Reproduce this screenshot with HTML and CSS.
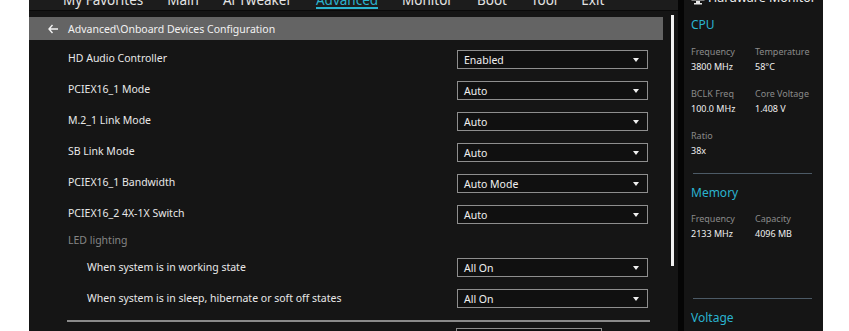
FILE: index.html
```html
<!DOCTYPE html>
<html lang="en">
<head>
  <meta charset="UTF-8" />
  <title>Advanced - Onboard Devices Configuration</title>
  <link rel="stylesheet" href="styles.css">
</head>
<body>
  <div class="screen">
    <div class="main">
      <nav class="topnav">
        <a href="#">My Favorites</a>
        <a href="#">Main</a>
        <a href="#">Ai Tweaker</a>
        <a href="#" class="active">Advanced</a>
        <a href="#">Monitor</a>
        <a href="#">Boot</a>
        <a href="#">Tool</a>
        <a href="#">Exit</a>
      </nav>

      <div class="body">
        <div class="page">
          <div class="crumb">
            <svg class="back" width="10" height="10" viewBox="0 0 10 10">
              <path d="M4.5 1 L1 5 L4.5 9 M1 5 H10" fill="none" stroke="#f2f2f2" stroke-width="1.4"/>
            </svg>
            <span>Advanced\Onboard Devices Configuration</span>
          </div>

          <div class="list">
            <div class="row"><span class="label">HD Audio Controller</span><div class="select"><span>Enabled</span><i class="caret"></i></div></div>
            <div class="row"><span class="label">PCIEX16_1 Mode</span><div class="select"><span>Auto</span><i class="caret"></i></div></div>
            <div class="row"><span class="label">M.2_1 Link Mode</span><div class="select"><span>Auto</span><i class="caret"></i></div></div>
            <div class="row"><span class="label">SB Link Mode</span><div class="select"><span>Auto</span><i class="caret"></i></div></div>
            <div class="row"><span class="label">PCIEX16_1 Bandwidth</span><div class="select"><span>Auto Mode</span><i class="caret"></i></div></div>
            <div class="row"><span class="label">PCIEX16_2 4X-1X Switch</span><div class="select"><span>Auto</span><i class="caret"></i></div></div>

            <div class="group">LED lighting</div>
            <div class="row sub"><span class="label">When system is in working state</span><div class="select"><span>All On</span><i class="caret"></i></div></div>
            <div class="row sub"><span class="label">When system is in sleep, hibernate or soft off states</span><div class="select"><span>All On</span><i class="caret"></i></div></div>

            <div class="sep"></div>
            <div class="row last"><div class="select short"></div></div>
          </div>
        </div>
        <div class="scroll"><div class="thumb"></div></div>
      </div>
    </div>

    <aside class="monitor">
      <div class="hm-title">
        <svg class="hm-icon" width="14" height="14" viewBox="0 0 14 14">
          <rect x="0.5" y="0.5" width="13" height="9" fill="#e8e8e8"/>
          <rect x="5" y="10" width="4" height="2" fill="#e8e8e8"/>
          <rect x="3" y="12" width="8" height="1.5" fill="#e8e8e8"/>
        </svg>
        <span>Hardware Monitor</span>
      </div>

      <h2>CPU</h2>
      <div class="stats">
        <div><div class="k">Frequency</div><div class="v">3800 MHz</div></div>
        <div><div class="k">Temperature</div><div class="v">58°C</div></div>
        <div><div class="k">BCLK Freq</div><div class="v">100.0 MHz</div></div>
        <div><div class="k">Core Voltage</div><div class="v">1.408 V</div></div>
        <div><div class="k">Ratio</div><div class="v">38x</div></div>
      </div>

      <div class="hm-sep first"></div>
      <h2>Memory</h2>
      <div class="stats mem">
        <div><div class="k">Frequency</div><div class="v">2133 MHz</div></div>
        <div><div class="k">Capacity</div><div class="v">4096 MB</div></div>
      </div>

      <div class="hm-sep second"></div>
      <h2>Voltage</h2>
    </aside>
  </div>
</body>
</html>
```

FILE: styles.css
```css
* { box-sizing: border-box; }
body {
  margin: 0;
  background: #fff;
  font-family: "Noto Sans", "Open Sans", sans-serif;
  height: 331px;
  overflow: hidden;
}
.screen {
  display: flex;
  margin-left: 29px;
  width: 794px;
  height: 331px;
  background: #050505;
  overflow: hidden;
}

/* main settings area */
.main {
  width: 649px;
  background: #151515;
  display: flex;
  flex-direction: column;
}
.topnav {
  flex: none;
  height: 11px;
  overflow: hidden;
  background: #1c1c1c;
  border-bottom: 1px solid #0a0a0a;
  display: flex;
  gap: 24px;
  padding-left: 34px;
}
.topnav a {
  color: #e4e4e4;
  font-size: 13.5px;
  line-height: 16px;
  height: 17px;
  margin-top: -8px;
  text-decoration: none;
  flex: none;
}
.topnav a.active { color: #2bb4cf; border-bottom: 2px solid #2bb4cf; }

.body { display: flex; flex: 1; min-height: 0; overflow: hidden; }
.page { flex: 1; }
.scroll { width: 15px; padding: 4px 0 0 8px; }
.thumb { width: 3px; height: 251px; background: #f2f2f2; }

.crumb {
  margin-top: 6px;
  height: 23px;
  background: #646464;
  color: #f2f2f2;
  font-size: 10.5px;
  display: flex;
  align-items: center;
  gap: 10px;
  padding-left: 19px;
}
.back { flex: none; }

.list { padding-top: 4px; }
.row {
  height: 31px;
  display: flex;
  align-items: center;
  justify-content: space-between;
  padding: 0 15px 0 39px;
}
.label { color: #e8e8e8; font-size: 10.5px; margin-bottom: 4px; }
.row.sub .label { padding-left: 19px; margin-bottom: 2px; }
.group {
  height: 22px;
  line-height: 20px;
  padding-left: 39px;
  color: #858585;
  font-size: 10.5px;
}
.select {
  flex: none;
  width: 191px;
  height: 19px;
  border: 1px solid #8e8e8e;
  background: #101010;
  color: #f0f0f0;
  font-size: 10.5px;
  display: flex;
  align-items: center;
  justify-content: space-between;
  padding: 0 8px 0 6px;
}
.caret {
  width: 0; height: 0;
  border-left: 3px solid transparent;
  border-right: 3px solid transparent;
  border-top: 4px solid #f0f0f0;
}
.sep {
  margin: 6px 13px 0 38px;
  height: 2px;
  background: #8a8a8a;
}
.row.last {
  height: auto;
  padding: 6px 0 0 427px;
  justify-content: flex-start;
}
.select.short { width: 146px; }

/* hardware monitor */
.monitor {
  width: 139px;
  margin-left: 6px;
  background: #151515;
  padding-left: 7px;
}
.hm-title {
  height: 11px;
  overflow: hidden;
  display: flex;
  gap: 3px;
  color: #ececec;
  font-size: 12.5px;
  line-height: 16px;
  white-space: nowrap;
}
.hm-title span { margin-top: -10px; }
.hm-icon { margin-top: -9px; flex: none; }
.monitor h2 {
  margin: 4px 0 0;
  font-size: 12px;
  font-weight: 400;
  line-height: 20px;
  color: #2ab3cf;
}
.stats {
  display: grid;
  grid-template-columns: 64px 1fr;
  row-gap: 12px;
  margin-top: 9px;
}
.stats.mem { margin-top: 8px; }
.k { color: #8a8a8a; font-size: 9px; line-height: 15px; }
.v { color: #f0f0f0; font-size: 9px; line-height: 15px; }
.hm-sep {
  height: 1px;
  width: 119px;
  margin-left: 2px;
  background: #4c5a66;
}
.hm-sep.first { margin-top: 15px; }
.hm-sep.second { margin-top: 57px; }
.hm-sep + h2 { margin-top: 9px; }
```
